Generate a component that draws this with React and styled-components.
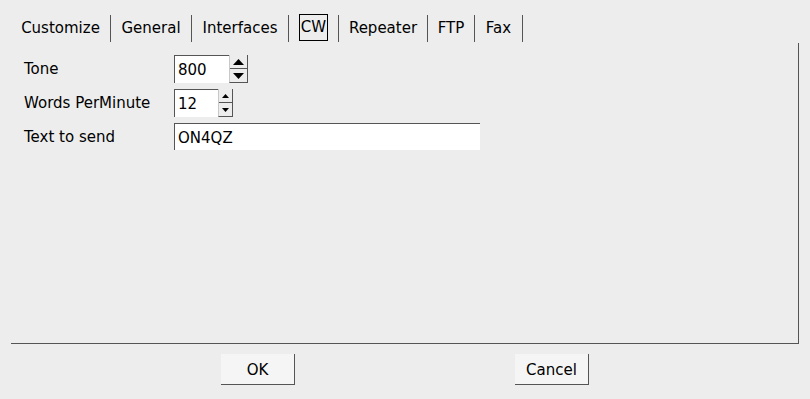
import React from "react";
import styled, { createGlobalStyle } from "styled-components";

const Global = createGlobalStyle`
  html, body { margin: 0; padding: 0; background: #ededed; }
  * { box-sizing: border-box; }
`;

const Window = styled.div`
  width: 810px;
  height: 399px;
  background: #ededed;
  font-family: "DejaVu Sans", "Liberation Sans", sans-serif;
  font-size: 15px;
  color: #000;
  display: flex;
  flex-direction: column;
  overflow: hidden;
`;

const TabBar = styled.div`
  display: flex;
  align-items: flex-start;
  height: 43px;
  padding-left: 11px;
`;

const Tab = styled.div`
  width: ${(p) => p.$w}px;
  height: 27px;
  margin-top: 15px;
  border-right: 1px solid #555;
  display: flex;
  justify-content: center;
  align-items: flex-start;
`;

const TabLabel = styled.span`
  display: block;
  height: 27px;
  line-height: 25px;
  margin-top: ${(p) => (p.$selected ? "-1px" : "0")};
  padding: 0 1px;
  border: 1px solid ${(p) => (p.$selected ? "#000" : "transparent")};
`;

const Panel = styled.div`
  margin-left: 11px;
  width: 788px;
  height: 301px;
  border-right: 1px solid #555;
  border-bottom: 1px solid #555;
  padding: 12px 0 0 13px;
  display: flex;
  flex-direction: column;
  gap: 6px;
`;

const Row = styled.div`
  display: flex;
  align-items: center;
  height: ${(p) => p.$h || 28}px;
`;

const Label = styled.div`
  width: 150px;
`;

const Field = styled.div`
  width: ${(p) => p.$w}px;
  height: 100%;
  background: #fff;
  border-top: 1px solid #555;
  border-left: 1px solid #555;
  padding-left: 3px;
  padding-top: 1px;
  display: flex;
  align-items: center;
`;

const Spinner = styled.div`
  width: ${(p) => p.$w}px;
  height: 100%;
  display: flex;
  flex-direction: column;
  border-right: 1px solid #555;
  border-bottom: 1px solid #555;
  border-left: 1px solid #c8c8c8;
`;

const SpinHalf = styled.div`
  flex: 1;
  display: flex;
  align-items: center;
  justify-content: center;
  background: #ededed;
  border-bottom: ${(p) => (p.$top ? "1px solid #555" : "none")};
`;

const Arrow = ({ up, size }) => {
  const w = size === "big" ? 11 : 7;
  const h = size === "big" ? 6 : 4;
  return (
    <svg width={w} height={h} viewBox={`0 0 ${w} ${h}`}>
      {up ? (
        <polygon points={`0,${h} ${w},${h} ${w / 2},0`} fill="#000" />
      ) : (
        <polygon points={`0,0 ${w},0 ${w / 2},${h}`} fill="#000" />
      )}
    </svg>
  );
};

const ButtonRow = styled.div`
  display: flex;
  justify-content: center;
  gap: 220px;
  margin-top: 10px;
`;

const Button = styled.div`
  width: 74px;
  height: 31px;
  background: #f5f5f5;
  border-right: 1px solid #555;
  border-bottom: 1px solid #555;
  display: flex;
  align-items: center;
  justify-content: center;
  padding-top: 2px;
`;

const tabs = [
  ["Customize", 100],
  ["General", 81],
  ["Interfaces", 97],
  ["CW", 50],
  ["Repeater", 89],
  ["FTP", 47],
  ["Fax", 48],
];

export default function App() {
  return (
    <>
      <Global />
      <Window>
        <TabBar>
          {tabs.map(([t, w]) => (
            <Tab key={t} $w={w}>
              <TabLabel $selected={t === "CW"}>{t}</TabLabel>
            </Tab>
          ))}
        </TabBar>
        <Panel>
          <Row>
            <Label>Tone</Label>
            <Field $w={55}>800</Field>
            <Spinner $w={19}>
              <SpinHalf $top>
                <Arrow up size="big" />
              </SpinHalf>
              <SpinHalf>
                <Arrow size="big" />
              </SpinHalf>
            </Spinner>
          </Row>
          <Row>
            <Label>Words PerMinute</Label>
            <Field $w={44}>12</Field>
            <Spinner $w={15}>
              <SpinHalf $top>
                <Arrow up />
              </SpinHalf>
              <SpinHalf>
                <Arrow />
              </SpinHalf>
            </Spinner>
          </Row>
          <Row $h={27}>
            <Label>Text to send</Label>
            <Field $w={306}>ON4QZ</Field>
          </Row>
        </Panel>
        <ButtonRow>
          <Button>OK</Button>
          <Button>Cancel</Button>
        </ButtonRow>
      </Window>
    </>
  );
}
